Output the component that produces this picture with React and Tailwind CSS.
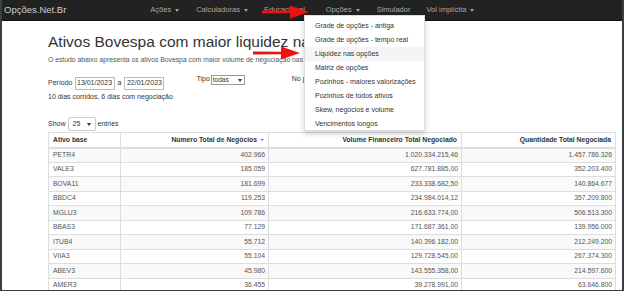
import React from 'react';

const rows = [
  ['PETR4', '402.966', '1.020.334.215,46', '1.457.786.326'],
  ['VALE3', '185.059', '627.781.885,00', '352.203.400'],
  ['BOVA11', '181.699', '233.338.682,50', '140.864.677'],
  ['BBDC4', '119.253', '234.984.014,12', '357.209.800'],
  ['MGLU3', '109.786', '216.633.774,00', '506.513.300'],
  ['BBAS3', '77.129', '171.687.361,00', '139.956.000'],
  ['ITUB4', '55.712', '140.396.182,00', '212.249.200'],
  ['VIIA3', '55.104', '129.728.545,00', '267.374.300'],
  ['ABEV3', '45.980', '143.555.358,00', '214.597.600'],
  ['AMER3', '36.455', '39.278.991,00', '63.646.800'],
];

const menu = [
  'Grade de opções - antiga',
  'Grade de opções - tempo real',
  'Liquidez nas opções',
  'Matriz de opções',
  'Pozinhos - maiores valorizações',
  'Pozinhos de todos ativos',
  'Skew, negócios e volume',
  'Vencimentos longos',
];

// small caret used in the navbar
const Caret = () => (
  <span className="ml-[4px] inline-block w-0 h-0 border-l-[2.5px] border-r-[2.5px] border-t-[3px] border-l-transparent border-r-transparent border-t-[#9d9d9d] align-middle" />
);

// red arrow annotation
const Arrow = ({ className }) => (
  <svg className={className} width="48" height="14" viewBox="0 0 48 14">
    <path d="M0 5.6 L28 5.8 L28 0.5 L47 7 L28 13.5 L28 8.2 L0 8.4 Z" fill="#ee1111" />
  </svg>
);

const App = () => {
  return (
    <div className="w-[624px] h-[292px] overflow-hidden bg-white font-['Liberation_Sans',Arial,sans-serif]">
      <div className="relative w-[624px] h-[291px] overflow-hidden border-l-2 border-r-2 border-b border-[#3a3f44]">
        {/* navbar */}
        <div className="h-[21px] bg-[#222222] border-b border-[#101010] flex items-center">
          <span className="ml-[2px] text-[9.5px] text-[#cfcfcf]">Opções.Net.Br</span>
          <div className="ml-[84px] flex items-center text-[7.5px] text-[#a8a8a8]">
            <span className="flex items-center">Ações<Caret /></span>
            <span className="ml-[17px] flex items-center">Calculadoras<Caret /></span>
            <span className="ml-[16px] flex items-center">Educacional</span>
            <span className="ml-[21px] flex items-center">Opções<Caret /></span>
            <span className="ml-[17px]">Simulador</span>
            <span className="ml-[16px] flex items-center">Vol implícita<Caret /></span>
          </div>
        </div>

        {/* content */}
        <div className="pl-[46px] pr-[7px] text-[#333]">
          <h1 className="mt-[10px] text-[15.5px] leading-[21px] whitespace-nowrap text-[#333]">Ativos Bovespa com maior liquidez nas opções</h1>
          <p className="mt-[3px] text-[6.8px] leading-[9px] text-[#555] whitespace-nowrap">
            O estudo abaixo apresenta os ativos Bovespa com maior volume de negociação nas opções no período selecionado
          </p>
          <div className="mt-[12px] flex items-center text-[7px] text-[#333] h-[14px]">
            <span>Período</span>
            <span className="ml-[2px] h-[13px] w-[40px] border border-[#bbb] flex items-center justify-center">13/01/2023</span>
            <span className="mx-[3px]">a</span>
            <span className="h-[13px] w-[40px] border border-[#bbb] flex items-center justify-center">22/01/2023</span>
            <span className="ml-[32px] self-start -mt-[2px]">Tipo</span>
            <span className="ml-[1px] self-start -mt-[1px] h-[10px] w-[34px] border border-[#999] flex items-center justify-between px-[1px] text-[6.5px]">
              todas
              <span className="w-0 h-0 border-l-[2.5px] border-r-[2.5px] border-t-[3px] border-l-transparent border-r-transparent border-t-[#333] mr-[1px]" />
            </span>
            <span className="ml-[47px] self-start -mt-[2px]">No período</span>
          </div>
          <p className="mt-[2px] text-[7px] leading-[9px] text-[#333]">10 dias corridos, 6 dias com negociação</p>
          <div className="mt-[16px] flex items-center text-[7px] text-[#333] h-[14px]">
            <span>Show</span>
            <span className="ml-[2px] h-[14px] w-[28px] border border-[#ccc] rounded-[2px] flex items-center justify-between px-[4px]">
              25
              <span className="w-0 h-0 border-l-[2.5px] border-r-[2.5px] border-t-[3px] border-l-transparent border-r-transparent border-t-[#333]" />
            </span>
            <span className="ml-[2px]">entries</span>
          </div>

          <table className="mt-[1px] w-[567px] border-collapse text-[6.8px] table-fixed">
            <colgroup>
              <col className="w-[72px]" />
              <col className="w-[148px]" />
              <col className="w-[193px]" />
              <col className="w-[154px]" />
            </colgroup>
            <thead>
              <tr className="h-[15px] text-[#333] font-bold">
                <th className="border border-[#ddd] border-b-2 text-left px-[4px]">Ativo base</th>
                <th className="border border-[#ddd] border-b-2 text-right px-[4px]">
                  Número Total de Negócios
                  <span className="ml-[3px] inline-block w-0 h-0 border-l-[2px] border-r-[2px] border-t-[2.5px] border-l-transparent border-r-transparent border-t-[#6b7bd0] align-middle" />
                </th>
                <th className="border border-[#ddd] border-b-2 text-right px-[4px]">Volume Financeiro Total Negociado</th>
                <th className="border border-[#ddd] border-b-2 text-right px-[4px]">Quantidade Total Negociada</th>
              </tr>
            </thead>
            <tbody>
              {rows.map((r, i) => (
                <tr key={r[0]} className={`h-[14.5px] text-[#555] ${i % 2 === 0 ? 'bg-[#f9f9f9]' : 'bg-white'}`}>
                  <td className="border border-[#ddd] text-left px-[4px]">{r[0]}</td>
                  <td className="border border-[#ddd] text-right px-[3px]">{r[1]}</td>
                  <td className="border border-[#ddd] text-right px-[3px]">{r[2]}</td>
                  <td className="border border-[#ddd] text-right px-[3px]">{r[3]}</td>
                </tr>
              ))}
            </tbody>
          </table>
        </div>

        {/* dropdown menu (Opções) */}
        <div className="absolute left-[302px] top-[15px] w-[121px] h-[116px] bg-white border border-[#ddd] shadow-[0_3px_6px_rgba(0,0,0,0.18)] pt-[3px]">
          {menu.map((m) => (
            <div
              key={m}
              className={`h-[14px] pl-[10px] flex items-center text-[7px] text-[#333] whitespace-nowrap ${m === 'Liquidez nas opções' ? 'bg-[#f5f5f5]' : ''}`}
            >
              {m}
            </div>
          ))}
        </div>

        {/* annotations */}
        <Arrow className="absolute left-[260px] top-[5px]" />
        <Arrow className="absolute left-[251px] top-[46px]" />
      </div>
    </div>
  );
};

export default App;
